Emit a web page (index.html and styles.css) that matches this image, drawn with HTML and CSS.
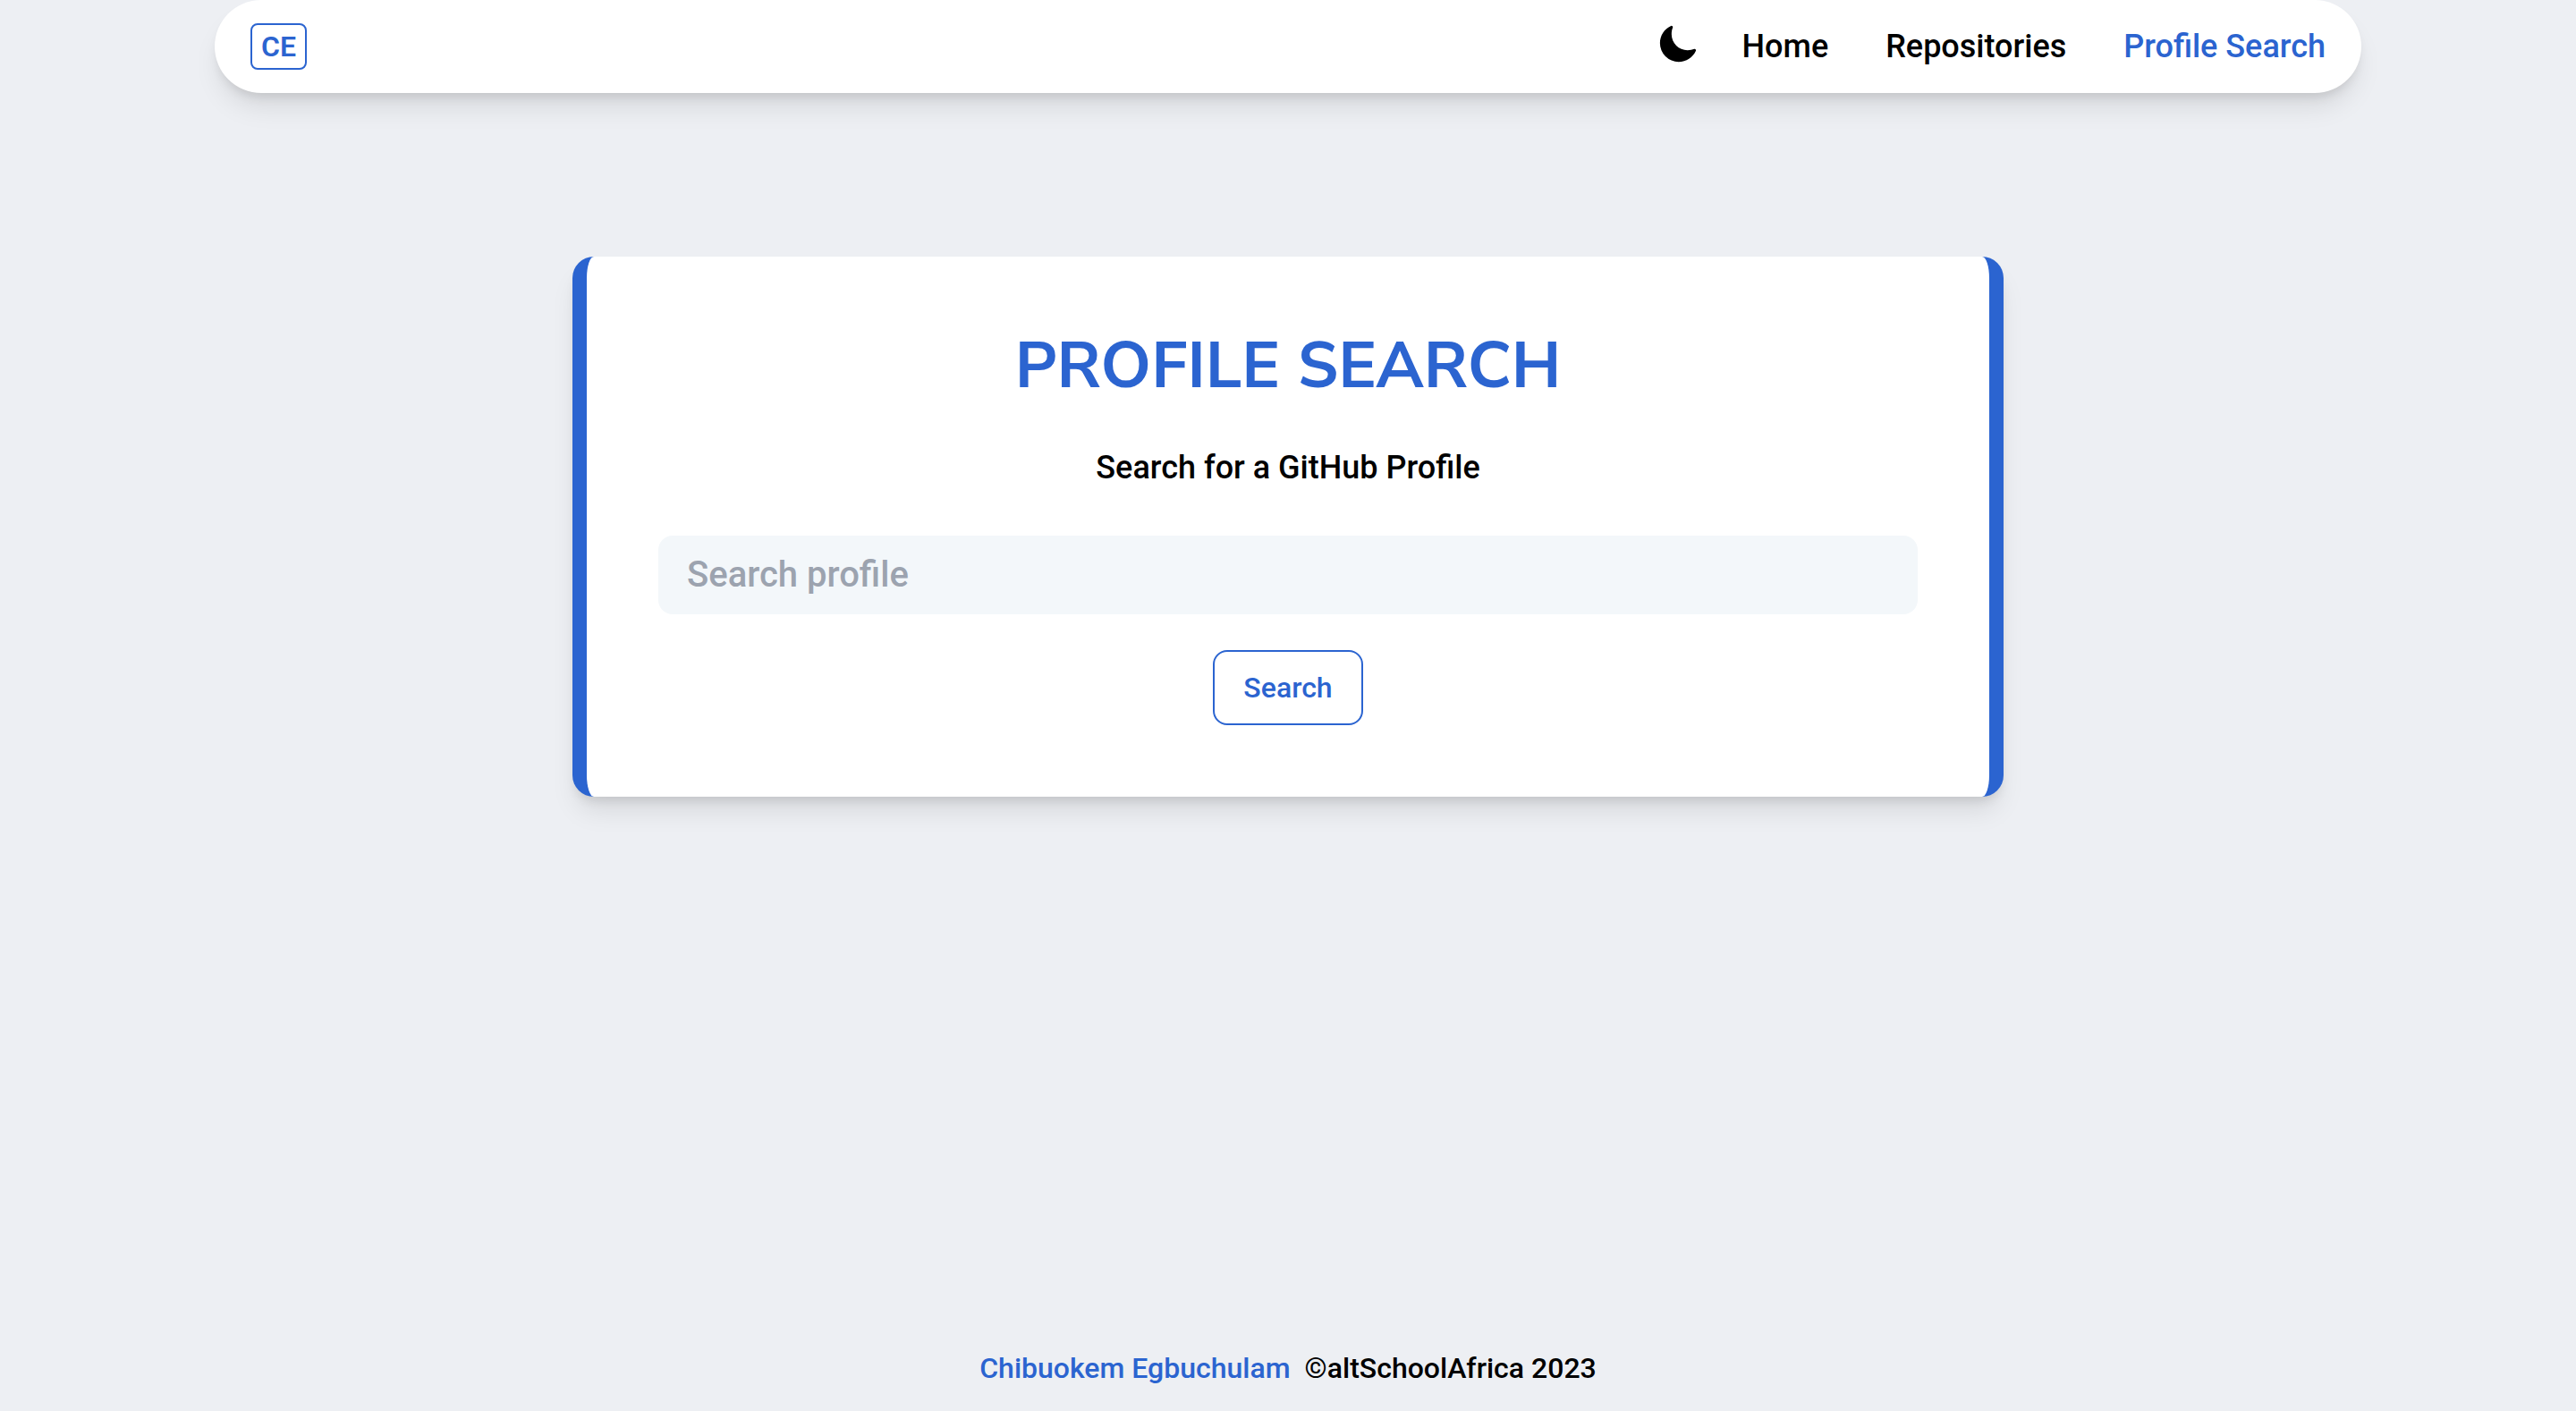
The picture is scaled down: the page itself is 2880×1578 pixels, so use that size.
FILE: index.html
```html
<!DOCTYPE html>
<html lang="en">
<head>
  <meta charset="utf-8">
  <meta name="viewport" content="width=device-width, initial-scale=1">
  <title>Profile Search</title>
  <link rel="stylesheet" href="styles.css">
</head>
<body>
  <header class="header">
    <a class="logo" href="#">CE</a>
    <nav class="nav">
      <button class="theme-toggle" type="button" aria-label="Toggle dark mode">
        <svg class="theme-icon" viewBox="0 0 512 512" aria-hidden="true"><path d="M264 480A232 232 0 0 1 32 248c0-94 54-178.28 137.61-214.67a16 16 0 0 1 21.06 21.06C181.07 76.43 176 104.66 176 136c0 110.28 89.72 200 200 200 31.34 0 59.57-5.07 81.61-14.67a16 16 0 0 1 21.06 21.06C442.28 426 358 480 264 480z"/></svg>
      </button>
      <ul class="nav-list">
        <li><a class="nav-link" href="#">Home</a></li>
        <li><a class="nav-link" href="#">Repositories</a></li>
        <li><a class="nav-link active" href="#" aria-current="page">Profile Search</a></li>
      </ul>
    </nav>
  </header>
  <main class="main">
    <form class="card">
      <h1 class="title">PROFILE SEARCH</h1>
      <label class="subtitle" for="profile">Search for a GitHub Profile</label>
      <input class="search-input" id="profile" type="text" placeholder="Search profile">
      <button class="search-button" type="submit">Search</button>
    </form>
  </main>
  <footer class="footer">
    <a class="author" href="#">Chibuokem Egbuchulam</a>
    <span>©altSchoolAfrica 2023</span>
  </footer>
</body>
</html>
```
FILE: styles.css
```css
* {
  box-sizing: border-box;
  margin: 0;
  padding: 0;
}

:root {
  --blue: #2b64d0;
  --shadow: 0 20px 30px -6px rgba(0, 0, 0, 0.1), 0 8px 12px -4px rgba(0, 0, 0, 0.1);
}

body {
  display: flex;
  flex-direction: column;
  align-items: center;
  min-height: 100vh;
  background: #edeff3;
  color: #000;
  font-family: Roboto, "Liberation Sans", sans-serif;
  font-weight: 500;
}

a {
  color: inherit;
  text-decoration: none;
}

button,
input {
  font: inherit;
}

.header {
  display: flex;
  align-items: center;
  justify-content: space-between;
  width: 90%;
  max-width: 2400px;
  padding: 26px 40px;
  border-radius: 52px;
  background: #fff;
  box-shadow: var(--shadow);
}

.logo {
  padding: 0 10px;
  border: 2px solid var(--blue);
  border-radius: 8px;
  color: var(--blue);
  font-size: 32px;
  font-weight: 600;
  line-height: 48px;
}

.nav {
  display: flex;
  align-items: center;
  gap: 49px;
}

.theme-toggle {
  padding-bottom: 6px;
  border: 0;
  background: none;
  cursor: pointer;
}

.theme-icon {
  display: block;
  width: 46px;
  height: 46px;
}

.nav-list {
  display: flex;
  gap: 64px;
  list-style: none;
}

.nav-link {
  font-size: 36px;
  line-height: 48px;
}

.active,
.author {
  color: var(--blue);
}

.main {
  display: flex;
  flex: 1;
  flex-direction: column;
  align-items: center;
  width: 100%;
  padding: 183px 32px 80px;
}

.card {
  display: flex;
  flex-direction: column;
  align-items: center;
  width: 100%;
  max-width: 1600px;
  padding: 80px;
  border: solid var(--blue);
  border-width: 0 16px;
  border-radius: 24px;
  background: #fff;
  box-shadow: var(--shadow);
}

.title {
  color: var(--blue);
  font-family: "Nunito Sans", Nunito, "Open Sans", sans-serif;
  font-size: 72px;
  font-weight: 700;
  line-height: 84px;
}

.subtitle {
  margin: 44px 0 48px;
  font-size: 36px;
  line-height: 56px;
}

.search-input {
  width: 100%;
  padding: 20px 32px;
  border: 0;
  border-radius: 16px;
  background: #f3f7fa;
  font-size: 40px;
  line-height: 48px;
}

.search-input::placeholder {
  color: #9ca3af;
}

.search-button {
  margin-top: 40px;
  padding: 16px 32px;
  border: 2px solid var(--blue);
  border-radius: 16px;
  background: #fff;
  color: var(--blue);
  font-size: 32px;
  line-height: 48px;
  cursor: pointer;
}

.footer {
  display: flex;
  gap: 16px;
  padding-bottom: 24px;
  font-size: 32px;
  line-height: 48px;
}
```
